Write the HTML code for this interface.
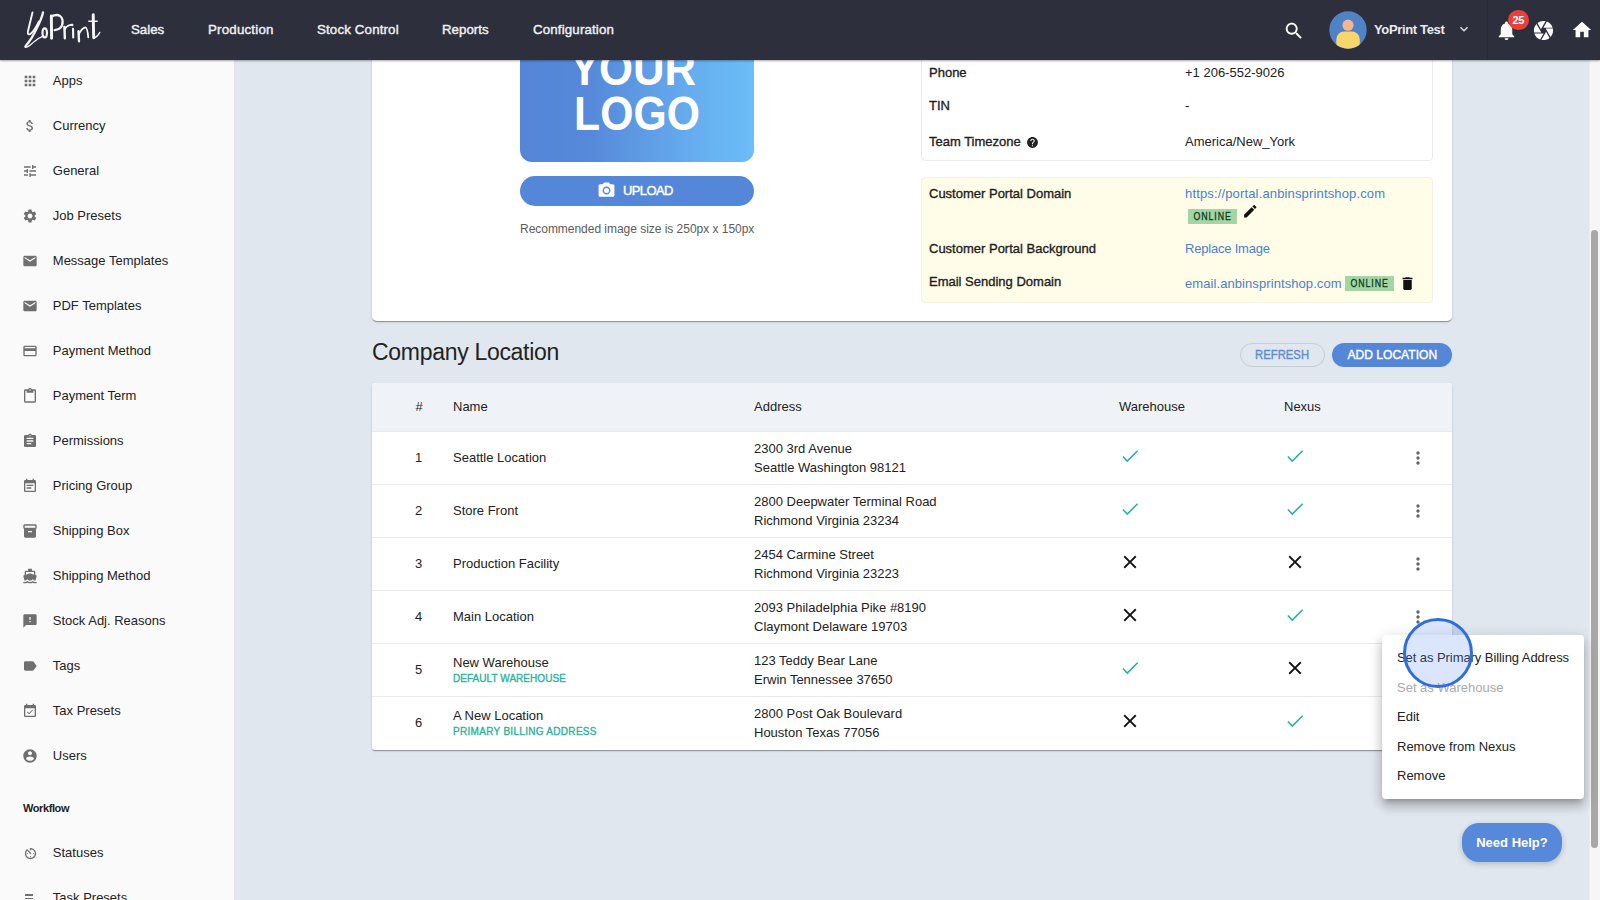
<!DOCTYPE html>
<html><head><meta charset="utf-8">
<style>
*{box-sizing:border-box;margin:0;padding:0}
html,body{width:1600px;height:900px;overflow:hidden}
body{position:relative;background:#e1e7ef;font-family:"Liberation Sans",sans-serif;color:#222;font-size:13px}
.a{position:absolute;white-space:nowrap}
svg{display:block}
#nav{position:absolute;left:0;top:0;width:1600px;height:60px;background:#2d303c;z-index:20;box-shadow:0 1px 2px rgba(0,0,0,.35)}
.nl{position:absolute;top:22px;line-height:16px;font-size:13.3px;color:#f1f1f4;-webkit-text-stroke:0.4px #f1f1f4}
#side{position:absolute;left:0;top:60px;width:235px;height:840px;background:#fafafa;border-right:1px solid #e3e3e3;z-index:5}
.si{position:absolute;left:52.8px;line-height:16px;font-size:13px;color:#222}
.sic{position:absolute;left:22px;width:16px;height:16px;fill:#6f6f6f}
.card{position:absolute;background:#fff;border-radius:5px;box-shadow:0 2px 1px -1px rgba(0,0,0,.2),0 1px 1px 0 rgba(0,0,0,.14),0 1px 3px 0 rgba(0,0,0,.12)}
.lbl{position:absolute;left:8px;font-size:13px;line-height:16px;color:#1e1e1e;-webkit-text-stroke:0.35px #1e1e1e}
.val{position:absolute;left:264px;font-size:13px;line-height:16px;color:#222}
.link{color:#4a7fd0}
.chip{position:absolute;height:15px;line-height:15px;width:49px;text-align:center;background:#a4d6a5;color:#0f3b1c;font-size:10px;-webkit-text-stroke:0.3px #0f3b1c}
.chip span{display:inline-block;letter-spacing:1px;transform:scaleX(0.88);margin-left:1px}
.th{position:absolute;top:17px;font-size:13px;line-height:16px;color:#222}
.row{position:absolute;left:0;width:1080px;height:53px;border-top:1px solid #e6e6e6}
.td{position:absolute;font-size:13px;line-height:16px;color:#222}
.sub{position:absolute;font-size:10px;letter-spacing:0.3px;color:#2bb39a;-webkit-text-stroke:0.35px #2bb39a;line-height:12px}
.ic{position:absolute}
.mi{position:absolute;left:15px;font-size:13px;line-height:16px;color:#222}
</style></head><body>

<!-- NAVBAR -->
<div id="nav">
  <svg class="a" style="left:20px;top:8px" width="84" height="44" viewBox="0 0 1600 838"><g fill="none" stroke="#f6f6f8" stroke-linecap="round" stroke-linejoin="round">
  <path stroke-width="36" d="M238 84 C215 180 165 380 150 450 C140 500 170 520 215 480 C265 435 320 340 360 255"/>
  <path stroke-width="44" d="M438 84 C420 200 350 330 280 466 C240 545 190 620 150 670 C120 705 95 730 103 740"/>
  <path stroke-width="24" d="M103 740 C120 760 180 720 240 665 C290 615 360 565 450 530"/>
  <ellipse cx="471" cy="475" rx="42" ry="86" stroke-width="42"/>
  <path stroke-width="56" d="M597 150 C598 300 600 450 602 577"/>
  <path stroke-width="44" d="M600 160 C660 130 720 125 760 150 C810 180 825 260 800 330 C780 380 740 410 660 420"/>
  <path stroke-width="46" d="M845 360 C850 430 852 510 854 575"/>
  <path stroke-width="30" d="M850 410 C880 350 940 320 994 317"/>
  <circle cx="994" cy="322" r="24" fill="#f6f6f8" stroke="none"/>
  <path stroke-width="40" d="M1010 395 L1014 560"/>
  <path stroke-width="44" d="M1115 440 C1118 520 1122 590 1124 633"/>
  <path stroke-width="34" d="M1118 505 C1150 440 1200 380 1245 370 C1280 370 1290 450 1300 560"/>
  <path stroke-width="56" d="M1395 130 C1398 300 1400 450 1404 568"/>
  <path stroke-width="30" d="M1311 252 L1469 252"/>
  <path stroke-width="26" d="M1410 568 C1450 560 1490 520 1520 465"/>
  </g></svg>
  <div class="nl" style="left:131px">Sales</div>
  <div class="nl" style="left:208px;letter-spacing:0.2px">Production</div>
  <div class="nl" style="left:317px;letter-spacing:0.15px">Stock Control</div>
  <div class="nl" style="left:442px">Reports</div>
  <div class="nl" style="left:533px;letter-spacing:0.15px">Configuration</div>

  <svg class="a" style="left:1282.5px;top:19.5px" width="22" height="22" viewBox="0 0 24 24"><path fill="#fff" d="M15.5 14h-.79l-.28-.27C15.41 12.59 16 11.11 16 9.5 16 5.910 13.09 3 9.5 3S3 5.91 3 9.5 5.91 16 9.5 16c1.61 0 3.09-.59 4.23-1.57l.27.28v.79l5 4.99L20.49 19l-4.99-5zm-6 0C7.01 14 5 11.99 5 9.5S7.01 5 9.5 5 14 7.01 14 9.5 11.99 14 9.5 14z"/></svg>
  <svg class="a" style="left:1329px;top:11px" width="38" height="38" viewBox="0 0 38 38"><defs><clipPath id="av"><circle cx="19" cy="19" r="18.7"/></clipPath></defs><circle cx="19" cy="19" r="18.7" fill="#4f83c6"/><g clip-path="url(#av)"><circle cx="19" cy="14.2" r="5.6" fill="#f3b68f"/><rect x="7.3" y="20.5" width="23.5" height="22" rx="8" fill="#f8d66b"/></g></svg>
  <div class="a" style="left:1374px;top:22px;line-height:16px;font-size:13px;font-weight:bold;color:#ebebef;letter-spacing:-0.35px">YoPrint Test</div>
  <svg class="a" style="left:1456px;top:21px" width="16" height="16" viewBox="0 0 24 24"><path fill="#e5e5e9" d="M16.59 8.59L12 13.17 7.41 8.59 6 10l6 6 6-6z"/></svg>
  <div class="a" style="left:1487px;top:0;width:1px;height:60px;background:#272a33"></div>
  <svg class="a" style="left:1495px;top:19px" width="23" height="23" viewBox="0 0 24 24"><path fill="#fff" d="M12 22c1.1 0 2-.9 2-2h-4c0 1.1.89 2 2 2zm6-6v-5c0-3.07-1.64-5.64-4.5-6.320V4c0-.83-.67-1.5-1.5-1.5s-1.5.67-1.5 1.5v.68C7.63 5.36 6 7.92 6 11v5l-2 2v1h16v-1l-2-2z"/></svg>
  <div class="a" style="left:1508px;top:9.5px;width:20.5px;height:20.5px;border-radius:50%;background:#e8413b;color:#fff;font-size:11px;font-weight:bold;line-height:20.5px;text-align:center;letter-spacing:-0.3px">25</div>
  <svg class="a" style="left:1532px;top:19px" width="23" height="23" viewBox="0 0 24 24"><path fill="#fff" d="M9.4 10.5l4.77-8.26C13.47 2.09 12.75 2 12 2c-2.4 0-4.6.85-6.32 2.25l3.66 6.35.06-.1zM21.54 9c-.92-2.92-3.15-5.26-6-6.34L11.88 9h9.66zm.26 1h-7.490l.29.5 4.76 8.25C21 16.97 22 14.61 22 12c0-.69-.07-1.35-.2-2zM8.54 12l-3.9-6.75C3.01 7.03 2 9.39 2 12c0 .69.07 1.35.2 2h7.49l-1.150-2zm-6.08 3c.92 2.92 3.15 5.26 6 6.34L12.12 15H2.46zm11.27 0l-3.9 6.76c.7.15 1.42.24 2.17.24 2.4 0 4.6-.85 6.32-2.25l-3.66-6.35-.93 1.6z"/></svg>
  <svg class="a" style="left:1570.5px;top:19px" width="22" height="22" viewBox="0 0 24 24"><path fill="#fff" d="M10 20v-6h4v6h5v-8h3L12 3 2 12h3v8z"/></svg>
</div>

<!-- SIDEBAR -->
<div id="side">
  <div class="si" style="top:13px">Apps</div>
  <div class="si" style="top:58px">Currency</div>
  <div class="si" style="top:103px">General</div>
  <div class="si" style="top:148px">Job Presets</div>
  <div class="si" style="top:193px">Message Templates</div>
  <div class="si" style="top:238px">PDF Templates</div>
  <div class="si" style="top:283px">Payment Method</div>
  <div class="si" style="top:328px">Payment Term</div>
  <div class="si" style="top:373px">Permissions</div>
  <div class="si" style="top:418px">Pricing Group</div>
  <div class="si" style="top:463px">Shipping Box</div>
  <div class="si" style="top:508px">Shipping Method</div>
  <div class="si" style="top:553px">Stock Adj. Reasons</div>
  <div class="si" style="top:598px">Tags</div>
  <div class="si" style="top:643px">Tax Presets</div>
  <div class="si" style="top:688px">Users</div>
  <div class="si" style="top:740px;left:23px;font-weight:bold;font-size:11px;letter-spacing:-0.4px">Workflow</div>
  <div class="si" style="top:785px">Statuses</div>
  <div class="si" style="top:830px">Task Presets</div>
  <svg class="sic" style="top:13px" viewBox="0 0 24 24"><path d="M4 8h4V4H4v4zm6 12h4v-4h-4v4zm-6 0h4v-4H4v4zm0-6h4v-4H4v4zm6 0h4v-4h-4v4zm6-10v4h4V4h-4zm-6 4h4V4h-4v4zm6 6h4v-4h-4v4zm0 6h4v-4h-4v4z"/></svg>
  <svg class="sic" style="top:58px" viewBox="0 0 24 24"><path d="M11.8 10.9c-2.27-.59-3-1.2-3-2.15 0-1.09 1.01-1.85 2.7-1.85 1.78 0 2.44.85 2.5 2.1h2.21c-.07-1.72-1.12-3.3-3.21-3.81V3h-3v2.16c-1.94.42-3.5 1.68-3.5 3.61 0 2.31 1.91 3.46 4.7 4.13 2.5.6 3 1.48 3 2.41 0 .69-.49 1.79-2.7 1.79-2.06 0-2.87-.92-2.98-2.1h-2.2c.12 2.19 1.76 3.42 3.68 3.83V21h3v-2.15c1.95-.37 3.5-1.5 3.5-3.55 0-2.84-2.43-3.81-4.7-4.4z"/></svg>
  <svg class="sic" style="top:103px" viewBox="0 0 24 24"><path d="M3 17v2h6v-2H3zM3 5v2h10V5H3zm10 16v-2h8v-2h-8v-2h-2v6h2zM7 9v2H3v2h4v2h2V9H7zm14 4v-2H11v2h10zm-6-4h2V7h4V5h-4V3h-2v6z"/></svg>
  <svg class="sic" style="top:148px" viewBox="0 0 24 24"><path d="M19.14 12.94c.04-.3.06-.61.06-.94 0-.32-.02-.64-.07-.94l2.03-1.58c.18-.14.23-.41.12-.61l-1.92-3.32c-.12-.22-.37-.29-.59-.22l-2.39.96c-.5-.38-1.03-.7-1.62-.94l-.36-2.54c-.04-.24-.24-.41-.48-.41h-3.84c-.24 0-.43.17-.47.41l-.36 2.54c-.59.24-1.13.57-1.62.94l-2.39-.96c-.22-.08-.47 0-.59.22L2.74 8.87c-.12.21-.08.47.12.61l2.03 1.58c-.05.3-.09.63-.09.94s.02.64.07.94l-2.03 1.58c-.18.14-.23.41-.12.61l1.92 3.32c.12.22.37.29.59.22l2.39-.96c.5.38 1.03.7 1.62.94l.36 2.54c.05.24.24.41.48.41h3.84c.24 0 .44-.17.47-.41l.36-2.54c.59-.24 1.13-.56 1.62-.94l2.39.96c.22.08.47 0 .59-.22l1.92-3.32c.12-.22.07-.47-.12-.61l-2.01-1.58zM12 15.6c-1.98 0-3.6-1.62-3.6-3.6s1.62-3.6 3.6-3.6 3.6 1.62 3.6 3.6-1.62 3.6-3.6 3.6z"/></svg>
  <svg class="sic" style="top:193px" viewBox="0 0 24 24"><path d="M20 4H4c-1.1 0-1.99.9-1.99 2L2 18c0 1.1.9 2 2 2h16c1.1 0 2-.9 2-2V6c0-1.1-.9-2-2-2zm0 4l-8 5-8-5V6l8 5 8-5v2z"/></svg>
  <svg class="sic" style="top:238px" viewBox="0 0 24 24"><path d="M20 4H4c-1.1 0-1.99.9-1.99 2L2 18c0 1.1.9 2 2 2h16c1.1 0 2-.9 2-2V6c0-1.1-.9-2-2-2zm0 4l-8 5-8-5V6l8 5 8-5v2z"/></svg>
  <svg class="sic" style="top:283px" viewBox="0 0 24 24"><path d="M20 4H4c-1.11 0-1.99.89-1.99 2L2 18c0 1.11.89 2 2 2h16c1.11 0 2-.89 2-2V6c0-1.11-.89-2-2-2zm0 14H4v-6h16v6zm0-10H4V6h16v2z"/></svg>
  <svg class="sic" style="top:328px" viewBox="0 0 24 24"><path d="M19 2h-4.18C14.4.84 13.3 0 12 0c-1.3 0-2.4.84-2.82 2H5c-1.1 0-2 .9-2 2v16c0 1.1.9 2 2 2h14c1.1 0 2-.9 2-2V4c0-1.1-.9-2-2-2zm-7 0c.55 0 1 .45 1 1s-.45 1-1 1-1-.45-1-1 .45-1 1-1zm7 18H5V4h2v3h10V4h2v16z"/></svg>
  <svg class="sic" style="top:373px" viewBox="0 0 24 24"><path d="M19 3h-4.18C14.4 1.84 13.3 1 12 1c-1.3 0-2.4.84-2.82 2H5c-1.1 0-2 .9-2 2v14c0 1.1.9 2 2 2h14c1.1 0 2-.9 2-2V5c0-1.1-.9-2-2-2zm-7 0c.55 0 1 .45 1 1s-.45 1-1 1-1-.45-1-1 .45-1 1-1zm2 14H7v-2h7v2zm3-4H7v-2h10v2zm0-4H7V7h10v2z"/></svg>
  <svg class="sic" style="top:418px" viewBox="0 0 24 24"><path d="M17 10H7v2h10v-2zm2-7h-1V1h-2v2H8V1H6v2H5c-1.11 0-1.99.9-1.99 2L3 19c0 1.1.89 2 2 2h14c1.1 0 2-.9 2-2V5c0-1.1-.9-2-2-2zm0 16H5V8h14v11zm-5-5H7v2h7v-2z"/></svg>
  <svg class="sic" style="top:463px" viewBox="0 0 24 24"><path d="M20 2H4c-1 0-2 .9-2 2v3.01c0 .72.43 1.34 1 1.69V20c0 1.1 1.1 2 2 2h14c.9 0 2-.9 2-2V8.7c.57-.35 1-.97 1-1.69V4c0-1.1-1-2-2-2zm-5 12H9v-2h6v2zm5-7H4V4h16v3z"/></svg>
  <svg class="sic" style="top:508px" viewBox="0 0 24 24"><path d="M20 21c-1.39 0-2.78-.47-4-1.32-2.44 1.71-5.56 1.71-8 0C6.78 20.53 5.39 21 4 21H2v2h2c1.38 0 2.74-.35 4-.99 2.52 1.29 5.48 1.29 8 0 1.26.65 2.62.99 4 .99h2v-2h-2zM3.95 19H4c1.6 0 3.02-.88 4-2 .98 1.12 2.4 2 4 2s3.02-.88 4-2c.98 1.12 2.4 2 4 2h.05l1.89-6.68c.08-.26.06-.54-.06-.78s-.34-.42-.6-.5L20 10.62V6c0-1.1-.9-2-2-2h-3V1H9v3H6c-1.1 0-2 .9-2 2v4.62l-1.29.42c-.26.08-.48.26-.6.5s-.15.52-.06.78L3.95 19zM6 6h12v3.97L12 8 6 9.97V6z"/></svg>
  <svg class="sic" style="top:553px" viewBox="0 0 24 24"><path d="M20 2H4c-1.1 0-1.99.9-1.99 2L2 22l4-4h14c1.1 0 2-.9 2-2V4c0-1.1-.9-2-2-2zm-7 12h-2v-2h2v2zm0-4h-2V6h2v4z"/></svg>
  <svg class="sic" style="top:598px" viewBox="0 0 24 24"><path d="M17.63 5.84C17.27 5.33 16.67 5 16 5L5 5.01C3.9 5.01 3 5.9 3 7v10c0 1.1.9 1.99 2 1.99L16 19c.67 0 1.27-.33 1.63-.84L22 12l-4.37-6.16z"/></svg>
  <svg class="sic" style="top:643px" viewBox="0 0 24 24"><path d="M16.53 11.06L15.47 10l-4.88 4.88-2.12-2.12-1.06 1.06L10.59 17l5.94-5.94zM19 3h-1V1h-2v2H8V1H6v2H5c-1.11 0-1.99.9-1.99 2L3 19c0 1.1.89 2 2 2h14c1.1 0 2-.9 2-2V5c0-1.1-.9-2-2-2zm0 16H5V8h14v11z"/></svg>
  <svg class="sic" style="top:688px" viewBox="0 0 24 24"><path d="M12 2C6.48 2 2 6.48 2 12s4.48 10 10 10 10-4.48 10-10S17.52 2 12 2zm0 3c1.66 0 3 1.34 3 3s-1.34 3-3 3-3-1.34-3-3 1.34-3 3-3zm0 14.2c-2.5 0-4.71-1.28-6-3.22.03-1.99 4-3.08 6-3.08 1.99 0 5.970 1.09 6 3.08-1.29 1.94-3.5 3.22-6 3.22z"/></svg>
  <svg class="sic" style="top:785.5px;left:22.5px;width:15px;height:15px" viewBox="0 0 24 24"><path d="M11 17c0 .55.45 1 1 1s1-.45 1-1-.45-1-1-1-1 .45-1 1zm0-14v4h2V5.08c3.39.49 6 3.39 6 6.92 0 3.870-3.13 7-7 7s-7-3.13-7-7c0-1.68.59-3.22 1.58-4.5L12 13l1.41-1.41-6.8-6.8v.02C4.42 6.45 3 9.05 3 12c0 4.97 4.02 9 9 9 4.97 0 9-4.03 9-9s-4.03-9-9-9h-1zm7 9c0-.55-.45-1-1-1s-1 .45-1 1 .45 1 1 1 1-.45 1-1zM6 12c0 .55.45 1 1 1s1-.45 1-1-.45-1-1-1-1 .45-1 1z"/></svg>
  <div class="a" style="left:25px;top:834px;width:8px;height:1.6px;background:#6f6f6f"></div><div class="a" style="left:25px;top:837.5px;width:8px;height:1.6px;background:#6f6f6f"></div><div class="a" style="left:25px;top:841px;width:5px;height:1.6px;background:#6f6f6f"></div>
</div>

<!-- CARD 1 -->
<div class="card" style="left:372px;top:-20px;width:1080px;height:341px"></div>
<div class="a" style="left:520px;top:20px;width:234px;height:142px;border-radius:12px;background:linear-gradient(90deg,#5485d6 0%,#5689d9 30%,#66aeef 75%,#6cbdf8 100%);z-index:2"></div>
<div class="a" style="left:516px;top:44px;width:234px;text-align:center;font-size:48px;line-height:50px;font-weight:bold;color:#fff;transform:scaleX(0.91);z-index:3">YOUR</div>
<div class="a" style="left:520px;top:88.5px;width:234px;text-align:center;font-size:48px;line-height:50px;font-weight:bold;color:#fff;transform:scaleX(0.89);z-index:3">LOGO</div>
<div class="a" style="left:520px;top:176px;width:234px;height:30px;border-radius:15px;background:#5587d8;z-index:2"></div>
<svg class="a" style="left:597px;top:181px;z-index:3" width="19" height="19" viewBox="0 0 24 24"><circle cx="12" cy="12" r="3.2" fill="#fff"/><path fill="#fff" d="M9 2L7.17 4H4c-1.1 0-2 .9-2 2v12c0 1.1.9 2 2 2h16c1.1 0 2-.9 2-2V6c0-1.1-.9-2-2-2h-3.17L15 2H9zm3 15c-2.76 0-5-2.24-5-5s2.24-5 5-5 5 2.24 5 5-2.24 5-5 5z"/></svg>
<div class="a" style="left:623px;top:183px;font-size:13px;line-height:16px;color:#fff;-webkit-text-stroke:0.4px #fff;letter-spacing:-0.6px;z-index:3">UPLOAD</div>
<div class="a" style="left:520px;top:222px;font-size:12px;line-height:15px;color:#5c5c5c;letter-spacing:-0.03px;z-index:3">Recommended image size is 250px x 150px</div>

<div class="a" style="left:921px;top:20px;width:512px;height:141px;border:1px solid #ebebeb;border-radius:4px;z-index:2"></div>
<div class="lbl a" style="left:929px;top:65px;z-index:3">Phone</div>
<div class="val a" style="left:1185px;top:65px;z-index:3">+1 206-552-9026</div>
<div class="lbl a" style="left:929px;top:98px;z-index:3">TIN</div>
<div class="val a" style="left:1185px;top:98px;z-index:3">-</div>
<div class="lbl a" style="left:929px;top:134px;z-index:3">Team Timezone</div>
<svg class="a" style="left:1026px;top:136px;z-index:3" width="13" height="13" viewBox="0 0 24 24"><path fill="#222" d="M12 2C6.48 2 2 6.48 2 12s4.48 10 10 10 10-4.480 10-10S17.52 2 12 2zm1 17h-2v-2h2v2zm2.07-7.75l-.9.92C13.45 12.9 13 13.5 13 15h-2v-.5c0-1.1.45-2.1 1.170-2.83l1.24-1.26c.37-.36.59-.86.59-1.41 0-1.1-.9-2-2-2s-2 .9-2 2H8c0-2.21 1.79-4 4-4s4 1.79 4 4c0 .88-.36 1.68-.93 2.25z"/></svg>
<div class="val a" style="left:1185px;top:134px;z-index:3">America/New_York</div>

<div class="a" style="left:921px;top:177px;width:512px;height:126px;background:#fffde8;border:1px solid #f5f2df;border-radius:4px;z-index:2"></div>
<div class="lbl a" style="left:929px;top:186px;z-index:3">Customer Portal Domain</div>
<div class="val a link" style="left:1185px;top:186px;z-index:3;letter-spacing:0.15px">https://portal.anbinsprintshop.com</div>
<div class="chip a" style="left:1188px;top:209px;z-index:3"><span>ONLINE</span></div>
<svg class="a" style="left:1242px;top:203px;z-index:3" width="16.5" height="16.5" viewBox="0 0 24 24"><path fill="#111" d="M3 17.25V21h3.75L17.81 9.940l-3.75-3.75L3 17.25zM20.71 7.04c.39-.39.39-1.02 0-1.41l-2.34-2.34c-.39-.39-1.020-.39-1.41 0l-1.83 1.83 3.75 3.75 1.83-1.83z"/></svg>
<div class="lbl a" style="left:929px;top:240.5px;z-index:3">Customer Portal Background</div>
<div class="val a link" style="left:1185px;top:240.5px;z-index:3;letter-spacing:-0.2px">Replace Image</div>
<div class="lbl a" style="left:929px;top:273.5px;z-index:3">Email Sending Domain</div>
<div class="val a link" style="left:1185px;top:276px;z-index:3;letter-spacing:0.08px">email.anbinsprintshop.com</div>
<div class="chip a" style="left:1345px;top:276px;z-index:3"><span>ONLINE</span></div>
<svg class="a" style="left:1399px;top:275px;z-index:3" width="17" height="17" viewBox="0 0 24 24"><path fill="#111" d="M6 19c0 1.1.9 2 2 2h8c1.1 0 2-.9 2-2V7H6v12zM19 4h-3.5l-1-1h-5l-1 1H5v2h14V4z"/></svg>

<!-- COMPANY LOCATION -->
<div class="a" style="left:372px;top:338px;font-size:23px;line-height:28px;color:#222;letter-spacing:-0.3px">Company Location</div>

<div class="card" style="left:372px;top:383px;width:1080px;height:367px;border-radius:3px;overflow:hidden">
  <div style="position:absolute;left:0;top:0;width:1080px;height:48px;background:#eff3f8"></div><div style="position:absolute;left:0;top:48px;width:1080px;height:1px;background:#e7eaee"></div>
</div>


<!-- buttons -->
<div class="a" style="left:1240px;top:343px;width:85px;height:24px;border:1px solid #c5cdd9;border-radius:12px;text-align:center;line-height:22px;font-size:13px;color:#5b8bd2;-webkit-text-stroke:0.35px #5b8bd2"><span style="display:inline-block;transform:scaleX(0.87)">REFRESH</span></div>
<div class="a" style="left:1332px;top:343px;width:120px;height:24px;background:#5587d8;border-radius:12px;text-align:center;line-height:24px;font-size:13px;color:#fff;-webkit-text-stroke:0.4px #fff"><span style="display:inline-block;transform:scaleX(0.93)">ADD LOCATION</span></div>
<div class="th a" style="left:415.5px;top:399px">#</div>
<div class="th a" style="left:453px;top:399px">Name</div>
<div class="th a" style="left:754px;top:399px">Address</div>
<div class="th a" style="left:1119px;top:399px">Warehouse</div>
<div class="th a" style="left:1284px;top:399px">Nexus</div>
<div class="td a" style="left:398px;top:450px;width:41px;text-align:center">1</div>
<div class="td a" style="left:453px;top:450px">Seattle Location</div>
<div class="td a" style="left:754px;top:441px">2300 3rd Avenue</div>
<div class="td a" style="left:754px;top:460px">Seattle Washington 98121</div>
<svg class="a" style="left:1119px;top:445px" width="22" height="22" viewBox="0 0 24 24"><path fill="none" stroke="#26b39a" stroke-width="1.7" d="M4.2 12.6L9 17.6 20.3 6.3"/></svg>
<svg class="a" style="left:1284px;top:445px" width="22" height="22" viewBox="0 0 24 24"><path fill="none" stroke="#26b39a" stroke-width="1.7" d="M4.2 12.6L9 17.6 20.3 6.3"/></svg>
<svg class="a" style="left:1408px;top:448px" width="20" height="20" viewBox="0 0 24 24"><path fill="#666" d="M12 8c1.1 0 2-.9 2-2s-.9-2-2-2-2 .9-2 2 .9 2 2 2zm0 2c-1.1 0-2 .9-2 2s.9 2 2 2 2-.9 2-2-.9-2-2-2zm0 6c-1.1 0-2 .9-2 2s.9 2 2 2 2-.9 2-2-.9-2-2-2z"/></svg>
<div class="a" style="left:372px;top:484px;width:1080px;height:1px;background:#e9e9e9"></div>
<div class="td a" style="left:398px;top:503px;width:41px;text-align:center">2</div>
<div class="td a" style="left:453px;top:503px">Store Front</div>
<div class="td a" style="left:754px;top:494px">2800 Deepwater Terminal Road</div>
<div class="td a" style="left:754px;top:513px">Richmond Virginia 23234</div>
<svg class="a" style="left:1119px;top:498px" width="22" height="22" viewBox="0 0 24 24"><path fill="none" stroke="#26b39a" stroke-width="1.7" d="M4.2 12.6L9 17.6 20.3 6.3"/></svg>
<svg class="a" style="left:1284px;top:498px" width="22" height="22" viewBox="0 0 24 24"><path fill="none" stroke="#26b39a" stroke-width="1.7" d="M4.2 12.6L9 17.6 20.3 6.3"/></svg>
<svg class="a" style="left:1408px;top:501px" width="20" height="20" viewBox="0 0 24 24"><path fill="#666" d="M12 8c1.1 0 2-.9 2-2s-.9-2-2-2-2 .9-2 2 .9 2 2 2zm0 2c-1.1 0-2 .9-2 2s.9 2 2 2 2-.9 2-2-.9-2-2-2zm0 6c-1.1 0-2 .9-2 2s.9 2 2 2 2-.9 2-2-.9-2-2-2z"/></svg>
<div class="a" style="left:372px;top:537px;width:1080px;height:1px;background:#e9e9e9"></div>
<div class="td a" style="left:398px;top:556px;width:41px;text-align:center">3</div>
<div class="td a" style="left:453px;top:556px">Production Facility</div>
<div class="td a" style="left:754px;top:547px">2454 Carmine Street</div>
<div class="td a" style="left:754px;top:566px">Richmond Virginia 23223</div>
<svg class="a" style="left:1119px;top:551px" width="22" height="22" viewBox="0 0 24 24"><path fill="#111" d="M19 6.41L17.59 5 12 10.59 6.41 5 5 6.41 10.59 12 5 17.59 6.41 19 12 13.41 17.59 19 19 17.59 13.41 12z"/></svg>
<svg class="a" style="left:1284px;top:551px" width="22" height="22" viewBox="0 0 24 24"><path fill="#111" d="M19 6.41L17.59 5 12 10.59 6.41 5 5 6.41 10.59 12 5 17.59 6.41 19 12 13.41 17.59 19 19 17.59 13.41 12z"/></svg>
<svg class="a" style="left:1408px;top:554px" width="20" height="20" viewBox="0 0 24 24"><path fill="#666" d="M12 8c1.1 0 2-.9 2-2s-.9-2-2-2-2 .9-2 2 .9 2 2 2zm0 2c-1.1 0-2 .9-2 2s.9 2 2 2 2-.9 2-2-.9-2-2-2zm0 6c-1.1 0-2 .9-2 2s.9 2 2 2 2-.9 2-2-.9-2-2-2z"/></svg>
<div class="a" style="left:372px;top:590px;width:1080px;height:1px;background:#e9e9e9"></div>
<div class="td a" style="left:398px;top:609px;width:41px;text-align:center">4</div>
<div class="td a" style="left:453px;top:609px">Main Location</div>
<div class="td a" style="left:754px;top:600px">2093 Philadelphia Pike #8190</div>
<div class="td a" style="left:754px;top:619px">Claymont Delaware 19703</div>
<svg class="a" style="left:1119px;top:604px" width="22" height="22" viewBox="0 0 24 24"><path fill="#111" d="M19 6.41L17.59 5 12 10.59 6.41 5 5 6.41 10.59 12 5 17.59 6.41 19 12 13.41 17.59 19 19 17.59 13.41 12z"/></svg>
<svg class="a" style="left:1284px;top:604px" width="22" height="22" viewBox="0 0 24 24"><path fill="none" stroke="#26b39a" stroke-width="1.7" d="M4.2 12.6L9 17.6 20.3 6.3"/></svg>
<svg class="a" style="left:1408px;top:607px" width="20" height="20" viewBox="0 0 24 24"><path fill="#666" d="M12 8c1.1 0 2-.9 2-2s-.9-2-2-2-2 .9-2 2 .9 2 2 2zm0 2c-1.1 0-2 .9-2 2s.9 2 2 2 2-.9 2-2-.9-2-2-2zm0 6c-1.1 0-2 .9-2 2s.9 2 2 2 2-.9 2-2-.9-2-2-2z"/></svg>
<div class="a" style="left:372px;top:643px;width:1080px;height:1px;background:#e9e9e9"></div>
<div class="td a" style="left:398px;top:662px;width:41px;text-align:center">5</div>
<div class="td a" style="left:453px;top:655px">New Warehouse</div>
<div class="sub a" style="left:453px;top:673px;letter-spacing:0.05px">DEFAULT WAREHOUSE</div>
<div class="td a" style="left:754px;top:653px">123 Teddy Bear Lane</div>
<div class="td a" style="left:754px;top:672px">Erwin Tennessee 37650</div>
<svg class="a" style="left:1119px;top:657px" width="22" height="22" viewBox="0 0 24 24"><path fill="none" stroke="#26b39a" stroke-width="1.7" d="M4.2 12.6L9 17.6 20.3 6.3"/></svg>
<svg class="a" style="left:1284px;top:657px" width="22" height="22" viewBox="0 0 24 24"><path fill="#111" d="M19 6.41L17.59 5 12 10.59 6.41 5 5 6.41 10.59 12 5 17.59 6.41 19 12 13.41 17.59 19 19 17.59 13.41 12z"/></svg>
<svg class="a" style="left:1408px;top:660px" width="20" height="20" viewBox="0 0 24 24"><path fill="#666" d="M12 8c1.1 0 2-.9 2-2s-.9-2-2-2-2 .9-2 2 .9 2 2 2zm0 2c-1.1 0-2 .9-2 2s.9 2 2 2 2-.9 2-2-.9-2-2-2zm0 6c-1.1 0-2 .9-2 2s.9 2 2 2 2-.9 2-2-.9-2-2-2z"/></svg>
<div class="a" style="left:372px;top:696px;width:1080px;height:1px;background:#e9e9e9"></div>
<div class="td a" style="left:398px;top:715px;width:41px;text-align:center">6</div>
<div class="td a" style="left:453px;top:708px">A New Location</div>
<div class="sub a" style="left:453px;top:726px">PRIMARY BILLING ADDRESS</div>
<div class="td a" style="left:754px;top:706px">2800 Post Oak Boulevard</div>
<div class="td a" style="left:754px;top:725px">Houston Texas 77056</div>
<svg class="a" style="left:1119px;top:710px" width="22" height="22" viewBox="0 0 24 24"><path fill="#111" d="M19 6.41L17.59 5 12 10.59 6.41 5 5 6.41 10.59 12 5 17.59 6.41 19 12 13.41 17.59 19 19 17.59 13.41 12z"/></svg>
<svg class="a" style="left:1284px;top:710px" width="22" height="22" viewBox="0 0 24 24"><path fill="none" stroke="#26b39a" stroke-width="1.7" d="M4.2 12.6L9 17.6 20.3 6.3"/></svg>
<svg class="a" style="left:1408px;top:713px" width="20" height="20" viewBox="0 0 24 24"><path fill="#666" d="M12 8c1.1 0 2-.9 2-2s-.9-2-2-2-2 .9-2 2 .9 2 2 2zm0 2c-1.1 0-2 .9-2 2s.9 2 2 2 2-.9 2-2-.9-2-2-2zm0 6c-1.1 0-2 .9-2 2s.9 2 2 2 2-.9 2-2-.9-2-2-2z"/></svg>

<!-- MENU -->
<div class="a" style="left:1382px;top:635px;width:202px;height:164px;background:#fff;border-radius:4px;box-shadow:0 5px 5px -3px rgba(0,0,0,.2),0 8px 10px 1px rgba(0,0,0,.14),0 3px 14px 2px rgba(0,0,0,.12);z-index:30">
  <div class="mi" style="top:15px;letter-spacing:-0.07px">Set as Primary Billing Address</div>
  <div class="mi" style="top:44.5px;color:#aaa">Set as Warehouse</div>
  <div class="mi" style="top:74px">Edit</div>
  <div class="mi" style="top:103.5px">Remove from Nexus</div>
  <div class="mi" style="top:133px">Remove</div>
</div>
<div class="a" style="left:1403px;top:618px;width:70px;height:70px;border-radius:50%;border:3.8px solid #2f6ddf;background:rgba(92,140,240,.22);z-index:31"></div>

<!-- NEED HELP -->
<div class="a" style="left:1462px;top:823px;width:100px;height:39px;border-radius:17px;background:#5789db;color:#fff;font-weight:bold;font-size:13px;line-height:39px;text-align:center;box-shadow:0 2px 6px rgba(0,0,0,.2);z-index:30">Need Help?</div>

<!-- SCROLLBAR -->
<div class="a" style="left:1589px;top:60px;width:11px;height:840px;background:#f6f6f6;border-left:1px solid #ececec;z-index:15"></div>
<div class="a" style="left:1591px;top:230px;width:7px;height:618px;background:#a8a8a8;border-radius:4px;z-index:16"></div>
</body></html>
